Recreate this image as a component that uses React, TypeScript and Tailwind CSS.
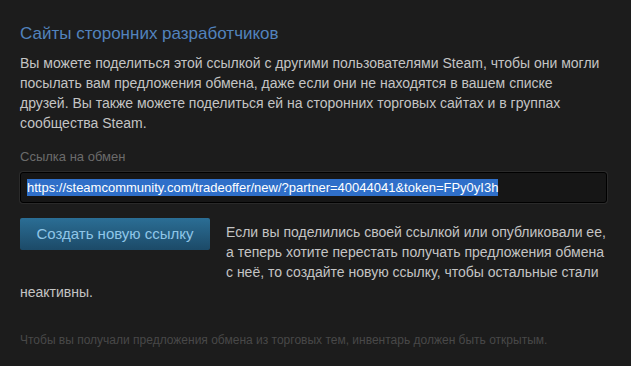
export default function App() {
  return (
    <div
      className="w-[631px] h-[366px] bg-[#1c1c1c] pl-5 pr-6 pt-[23px] overflow-hidden"
      style={{ fontFamily: '"Liberation Sans", Arial, sans-serif' }}
    >
      <h2 className="text-[17px] leading-[22px] text-[#5283bd] font-normal">
        Сайты сторонних разработчиков
      </h2>
      <p className="mt-[8px] text-[14px] leading-[20px] text-[#c4c4c4] whitespace-nowrap">
        Вы можете поделиться этой ссылкой с другими пользователями Steam, чтобы они могли
        <br />
        посылать вам предложения обмена, даже если они не находятся в вашем списке
        <br />
        друзей. Вы также можете поделиться ей на сторонних торговых сайтах и в группах
        <br />
        сообщества Steam.
      </p>

      <div className="mt-[16px] text-[13px] leading-[16px] text-[#6b6b6b]">Ссылка на обмен</div>
      <div className="mt-[7px] h-[31px] rounded-[3px] border border-black bg-[#161616] shadow-[0_0_0_1px_#2a2a2a] flex items-center pl-[6px]">
        <span className="text-[13px] leading-[17px] bg-[#2f6fc9] text-white">
          https://steamcommunity.com/tradeoffer/new/?partner=40044041&amp;token=FPy0yI3h
        </span>
      </div>

      <div className="mt-[15px] text-[14px] leading-[20px] text-[#c4c4c4] whitespace-nowrap">
        <div className="float-left mr-4 h-[62px]">
          <button className="w-[190px] h-[32px] rounded-[2px] bg-gradient-to-b from-[#2b6e95] to-[#1c4a68] text-[15px] leading-[20px] text-[#8fc6e8]">
            Создать новую ссылку
          </button>
        </div>
        <p className="pt-[4px]">
          Если вы поделились своей ссылкой или опубликовали ее,
          <br />
          а теперь хотите перестать получать предложения обмена
          <br />
          с неё, то создайте новую ссылку, чтобы остальные стали
          <br />
          неактивны.
        </p>
      </div>

      <p className="clear-both mt-[30px] text-[12px] leading-[16px] text-[#484848]">
        Чтобы вы получали предложения обмена из торговых тем, инвентарь должен быть открытым.
      </p>
    </div>
  )
}
